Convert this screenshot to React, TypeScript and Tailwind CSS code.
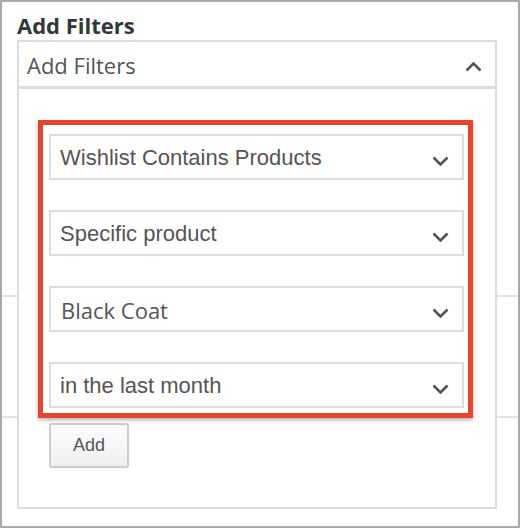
import React from "react";

const sans = "font-['Liberation_Sans',Arial,sans-serif]";
const open = "font-['Open_Sans',sans-serif]";

// Chevron drawn to the reference's 16x8 glyph
const Chevron = ({ up = false }: { up?: boolean }) => (
    <svg width="17" height="10" viewBox="0 0 17 10" className="shrink-0">
        <polyline
            points={up ? "1.5,8.5 8.5,1.5 15.5,8.5" : "1.5,1.5 8.5,8.5 15.5,1.5"}
            fill="none"
            stroke="#555"
            strokeWidth="2.6"
        />
    </svg>
);

const Select = ({ label, font = sans, pad = "pl-[9px]" }: { label: string; font?: string; pad?: string }) => (
    <div className="flex h-[46px] items-center justify-between border-2 border-[#dddddd] bg-white pr-[13px]">
        <span className={`${font} ${pad} text-[22px] leading-none text-[#555] pt-[1px]`}>{label}</span>
        <div className="mt-[8px]">
            <Chevron />
        </div>
    </div>
);

export default function App() {
    return (
        <div className="relative h-[528px] w-[520px] overflow-hidden border-2 border-[#a9a9a9] bg-white">
            {/* page behind the dropdown */}
            <div className={`${open} pl-[15px] pt-[8px] text-[22px] font-bold leading-[30px] text-[#32373c]`}>
                Add Filters
            </div>
            <div className="h-[257px] border-b-2 border-[#e2e2e2]" />
            <div className="h-[121px] border-b-2 border-[#e2e2e2]" />

            {/* open filter dropdown */}
            <div className="absolute left-[15px] top-[38px] w-[480px]">
                <div className="flex h-[49px] items-center justify-between border-x-2 border-t-2 border-b-[3px] border-[#dddddd] bg-white pl-[8px] pr-[13px]">
                    <span className={`${open} text-[22px] leading-none text-[#555] pt-[2px]`}>Add Filters</span>
                    <div className="mt-[6px]">
                        <Chevron up />
                    </div>
                </div>
                <div className="border-x-2 border-b-2 border-[#dddddd] bg-white pb-[39px] pt-[31px]">
                    <div className="ml-[19px] mr-[22px] flex flex-col gap-[30px] border-[5px] border-[#e8432b] pb-[5px] pl-[6px] pr-[4px] pt-[9px] shadow-[0_2px_4px_rgba(0,0,0,0.3)]">
                        <Select label="Wishlist Contains Products" />
                        <Select label="Specific product" />
                        <Select label="Black Coat" font={open} pad="pl-[10px]" />
                        <Select label="in the last month" />
                    </div>
                    <button
                        className={`${sans} ml-[30px] mt-[5px] flex h-[45px] w-[80px] items-center justify-center rounded-[3px] border-2 border-[#cccccc] bg-gradient-to-b from-[#fefefe] to-[#efefef] text-[18px] text-[#555]`}
                    >
                        Add
                    </button>
                </div>
            </div>
        </div>
    );
}
